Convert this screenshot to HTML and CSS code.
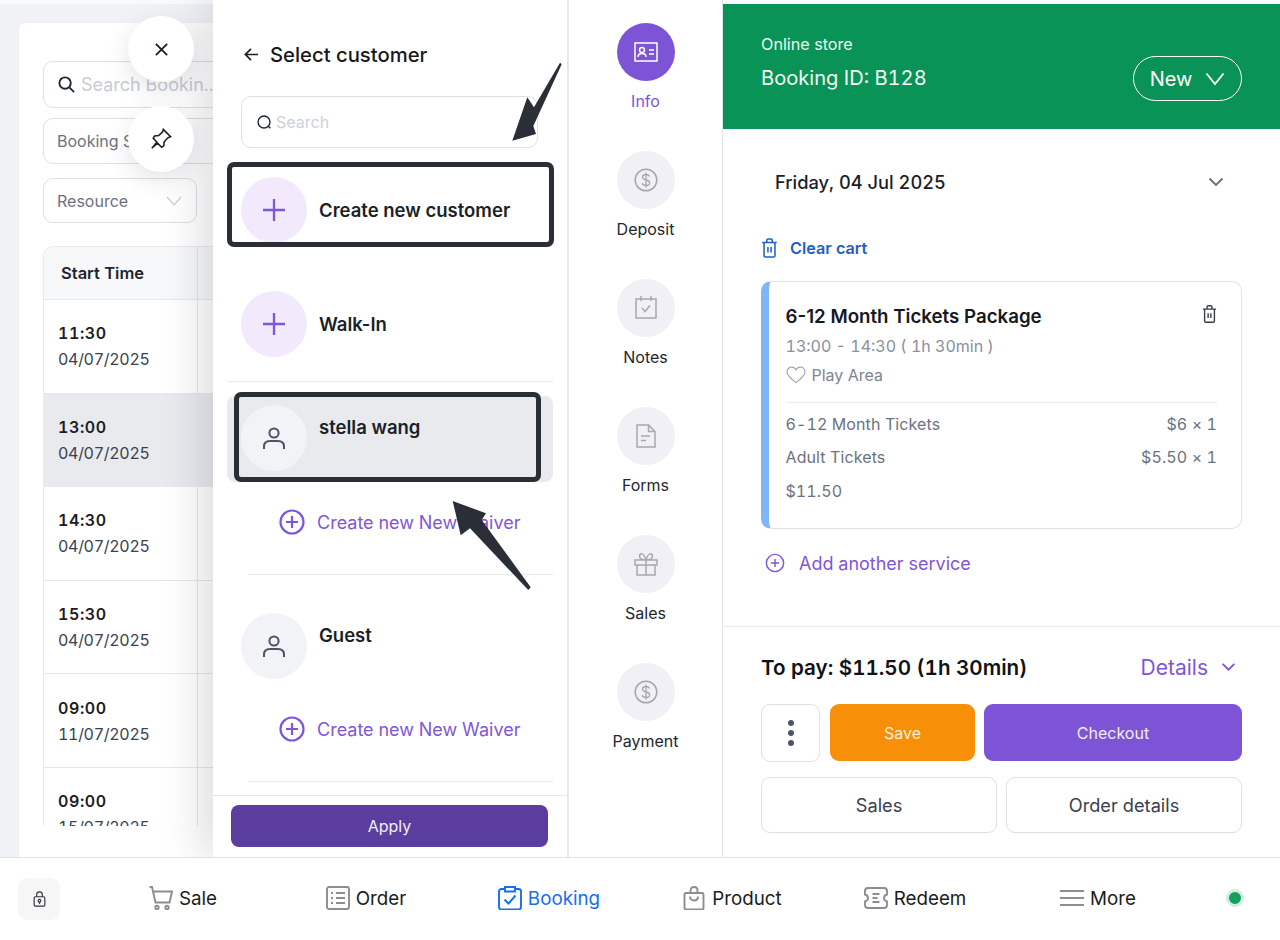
FILE: index.html
```html
<!DOCTYPE html>
<html lang="en">
<head>
<meta charset="utf-8">
<title>Booking</title>
<link rel="stylesheet" href="styles.css">
</head>
<body>
<div class="page">
  <main class="main">
    <section class="bookings">
      <div class="bookings-card">
        <div class="field field-search">
          <svg class="ico-search" viewBox="0 0 20 20"><circle cx="8.5" cy="8.5" r="6"/><path d="M13 13l5 5"/></svg>
          <span class="placeholder">Search Bookin..</span>
        </div>
        <div class="field field-status"><span>Booking Status</span></div>
        <div class="field field-resource">
          <span>Resource</span>
          <svg class="ico-chev-light" viewBox="0 0 18 12"><path d="M1 2l8 9 8-9"/></svg>
        </div>
        <div class="table">
          <div class="thead"><div class="cell">Start Time</div></div>
          <div class="row"><div class="cell"><b>11:30</b><span>04/07/2025</span></div></div>
          <div class="row row-selected"><div class="cell"><b>13:00</b><span>04/07/2025</span></div></div>
          <div class="row"><div class="cell"><b>14:30</b><span>04/07/2025</span></div></div>
          <div class="row"><div class="cell"><b>15:30</b><span>04/07/2025</span></div></div>
          <div class="row"><div class="cell"><b>09:00</b><span>11/07/2025</span></div></div>
          <div class="row"><div class="cell"><b>09:00</b><span>15/07/2025</span></div></div>
        </div>
      </div>
    </section>

    <section class="drawer">
      <header class="drawer-head">
        <svg class="ico-back" viewBox="0 0 18 18"><path d="M16 9H2.5M8.5 3l-6 6 6 6"/></svg>
        <h1>Select customer</h1>
      </header>
      <div class="drawer-search">
        <svg class="ico-search-sm" viewBox="0 0 18 18"><circle cx="8.5" cy="8.5" r="6.3"/><path d="M13 13l2.2 2.2"/></svg>
        <span>Search</span>
      </div>
      <div class="customers">
        <div class="cust cust-create">
          <span class="avatar avatar-add"><svg viewBox="0 0 24 24"><path d="M12 1v22M1 12h22"/></svg></span>
          <span class="cust-name cust-name-mid">Create new customer</span>
        </div>
        <div class="cust cust-walk">
          <span class="avatar avatar-add"><svg viewBox="0 0 24 24"><path d="M12 1v22M1 12h22"/></svg></span>
          <span class="cust-name cust-name-mid">Walk-In</span>
        </div>
        <hr class="rule rule-full">
        <div class="cust cust-selected">
          <span class="avatar avatar-user"><svg viewBox="0 0 24 24"><circle cx="12" cy="7" r="4.6"/><path d="M2 23v-2.500c0-3.500 2.500-5.500 6-5.500h8c3.500 0 6 2 6 5.500V23"/></svg></span>
          <span class="cust-name">stella wang</span>
        </div>
        <div class="waiver waiver-first">
          <svg viewBox="0 0 26 26"><circle cx="13" cy="13" r="11.500"/><path d="M13 7v12M7 13h12"/></svg>
          <span>Create new New Waiver</span>
        </div>
        <hr class="rule rule-first">
        <div class="cust cust-guest">
          <span class="avatar avatar-user"><svg viewBox="0 0 24 24"><circle cx="12" cy="7" r="4.6"/><path d="M2 23v-2.500c0-3.500 2.500-5.500 6-5.500h8c3.500 0 6 2 6 5.500V23"/></svg></span>
          <span class="cust-name">Guest</span>
        </div>
        <div class="waiver waiver-second">
          <svg viewBox="0 0 26 26"><circle cx="13" cy="13" r="11.500"/><path d="M13 7v12M7 13h12"/></svg>
          <span>Create new New Waiver</span>
        </div>
        <hr class="rule rule-second">
      </div>
      <footer class="drawer-foot"><button class="btn-apply">Apply</button></footer>
    </section>

    <nav class="rail">
      <div class="step step-active">
        <span class="step-circle"><svg viewBox="0 0 24 20"><rect x="1" y="1" width="22" height="18"/><circle cx="8" cy="8" r="2.500"/><path d="M4 15c0-2.500 1.500-3.500 4-3.500s4 1 4 3.500M15 8h5M15 12h5"/></svg></span>
        <span class="step-label">Info</span>
      </div>
      <div class="step">
        <span class="step-circle"><svg viewBox="0 0 24 24"><circle cx="12" cy="12" r="10.800"/><path class="thin" d="M15.500 8.500c-.5-1.300-1.800-2-3.500-2-2 0-3.500 1-3.500 2.700 0 3.800 7.200 1.800 7.200 5.600 0 1.700-1.600 2.700-3.700 2.700-1.900 0-3.300-.8-3.800-2.200M12 4.500v15"/></svg></span>
        <span class="step-label">Deposit</span>
      </div>
      <div class="step">
        <span class="step-circle"><svg viewBox="0 0 22 24"><rect x="1" y="3" width="20" height="19"/><path d="M6 0v5M16 0v5M7 12l3 3.500 5-6"/></svg></span>
        <span class="step-label">Notes</span>
      </div>
      <div class="step">
        <span class="step-circle"><svg viewBox="0 0 20 24"><path d="M1 1h11.500L19 7.500V23H1zM12.500 1v6.500H19M5 12h9M5 16.500h5"/></svg></span>
        <span class="step-label">Forms</span>
      </div>
      <div class="step">
        <span class="step-circle"><svg viewBox="0 0 24 24"><path d="M1 8h22v5H1zM3 13v10h18V13M12 8v15M12 8C8 8 5.500 6.500 5.500 4S9.500-.5 12 8zM12 8c4 0 6.500-1.500 6.500-4S14.500-.5 12 8z"/></svg></span>
        <span class="step-label">Sales</span>
      </div>
      <div class="step">
        <span class="step-circle"><svg viewBox="0 0 24 24"><circle cx="12" cy="12" r="10.800"/><path class="thin" d="M15.500 8.500c-.5-1.300-1.800-2-3.500-2-2 0-3.500 1-3.500 2.700 0 3.800 7.200 1.800 7.200 5.600 0 1.700-1.600 2.700-3.700 2.700-1.900 0-3.300-.8-3.800-2.200M12 4.500v15"/></svg></span>
        <span class="step-label">Payment</span>
      </div>
    </nav>

    <section class="detail">
      <header class="detail-head">
        <div class="detail-title">
          <div class="store">Online store</div>
          <div class="booking-id">Booking ID: B128</div>
        </div>
        <div class="pill"><span>New</span><svg viewBox="0 0 20 14"><path d="M1.500 1.500L10 12l8.500-10.500"/></svg></div>
      </header>
      <div class="detail-body">
        <div class="date-row">
          <span>Friday, 04 Jul 2025</span>
          <svg viewBox="0 0 16 10"><path d="M1.500 1.500L8 8l6.500-6.500"/></svg>
        </div>
        <div class="clear-cart">
          <svg viewBox="0 0 18 22"><path d="M1 5h16M3 5v14.500c0 1 .8 1.500 1.500 1.500h9c.7 0 1.500-.5 1.500-1.500V5M6 5V2.500C6 1.500 6.500 1 7.500 1h3c1 0 1.500.5 1.500 1.500V5M7.300 10v6M10.700 10v6"/></svg>
          <span>Clear cart</span>
        </div>
        <article class="cart">
          <div class="cart-top">
            <h2>6-12 Month Tickets Package</h2>
            <svg class="ico-trash" viewBox="0 0 18 22"><path d="M1 5h16M3 5v14.500c0 1 .8 1.500 1.500 1.500h9c.7 0 1.500-.5 1.500-1.500V5M6 5V2.500C6 1.500 6.500 1 7.500 1h3c1 0 1.500.5 1.500 1.500V5M7.300 10v6M10.700 10v6"/></svg>
          </div>
          <div class="cart-time">13:00 - 14:30 ( 1h 30min )</div>
          <div class="cart-place">
            <svg viewBox="0 0 22 20"><path d="M11 18.500C5 14 1 10.500 1 6.500 1 3.500 3.300 1.300 6 1.300c2 0 3.900 1 5 3 1.100-2 3-3 5-3 2.700 0 5 2.200 5 5.200 0 4-4 7.500-10 12z"/></svg>
            <span>Play Area</span>
          </div>
          <hr class="cart-rule">
          <div class="line line-first"><span>6-12 Month Tickets</span><span>$6 × 1</span></div>
          <div class="line line-second"><span>Adult Tickets</span><span>$5.50 × 1</span></div>
          <div class="line line-total"><span>$11.50</span></div>
        </article>
        <div class="add-service">
          <svg viewBox="0 0 22 22"><circle cx="11" cy="11" r="9.500"/><path d="M11 6.500v9M6.500 11h9"/></svg>
          <span>Add another service</span>
        </div>
      </div>
      <footer class="detail-foot">
        <div class="pay-row">
          <span class="pay">To pay: $11.50 (1h 30min)</span>
          <span class="details">Details <svg viewBox="0 0 14 9"><path d="M1.500 1.500L7 7l5.500-5.500"/></svg></span>
        </div>
        <div class="actions">
          <button class="btn btn-more"><i></i><i></i><i></i></button>
          <button class="btn btn-save">Save</button>
          <button class="btn btn-checkout">Checkout</button>
        </div>
        <div class="actions-2">
          <button class="btn btn-plain">Sales</button>
          <button class="btn btn-plain">Order details</button>
        </div>
      </footer>
    </section>
  </main>

  <nav class="tabbar">
    <div class="tab-lock"><span class="lock"><svg viewBox="0 0 14 18"><rect x="1" y="6.500" width="12" height="10.500" rx="1.500"/><path d="M3.800 6.500V4.200C3.800 2.300 5.200 1 7 1s3.200 1.300 3.200 3.200v2.300"/><circle cx="7" cy="11" r="1.500"/><path d="M7 12.500v2"/></svg></span></div>
    <div class="tab">
      <svg viewBox="0 0 24 24"><path d="M.5 1H3l3.500 15.500h14L23 5.500H4.500"/><circle cx="8" cy="21.500" r="1.700"/><circle cx="18" cy="21.500" r="1.700"/></svg>
      <span>Sale</span>
    </div>
    <div class="tab">
      <svg viewBox="0 0 24 24"><rect x="1" y="1" width="22" height="22" rx="2"/><path d="M10 7h9M10 12h9M10 17h9M5 7h2M5 12h2M5 17h2"/></svg>
      <span>Order</span>
    </div>
    <div class="tab tab-active">
      <svg viewBox="0 0 24 24"><path d="M7 3H3.500C2 3 1 4 1 5.500V21c0 1.500 1 2.500 2.500 2.500h17c1.500 0 2.500-1 2.500-2.500V5.500C23 4 22 3 20.500 3H17M7 1h10v4.500H7zM6.500 13.500l4 4 7-8"/></svg>
      <span>Booking</span>
    </div>
    <div class="tab">
      <svg viewBox="0 0 24 24"><path d="M4 7h16c.8 0 1.500.7 1.500 1.500V22c0 .8-.7 1.500-1.500 1.500H4c-.8 0-1.500-.7-1.500-1.500V8.500C2.500 7.700 3.200 7 4 7zM8.500 7V4.500C8.500 2.500 10 1 12 1s3.500 1.500 3.500 3.500V7M8 10.500c0 2.500 1.700 4 4 4s4-1.500 4-4"/></svg>
      <span>Product</span>
    </div>
    <div class="tab">
      <svg viewBox="0 0 24 22"><path d="M4 1h16c1.700 0 3 1.300 3 3v3.500c-2 .5-3 2-3 3.500s1 3 3 3.500V18c0 1.700-1.300 3-3 3H4c-1.700 0-3-1.300-3-3v-3.500c2-.5 3-2 3-3.500S3 8 1 7.500V4c0-1.700 1.300-3 3-3zM8.500 7h7M8.500 11h5M8.500 15h7"/></svg>
      <span>Redeem</span>
    </div>
    <div class="tab">
      <svg viewBox="0 0 24 18"><path d="M0 2h24M0 9h24M0 16h24"/></svg>
      <span>More</span>
    </div>
    <div class="tab-status"><span class="status-dot"></span></div>
  </nav>

  <div class="fab fab-close"><svg viewBox="0 0 16 16"><path d="M2 2l12 12M14 2L2 14"/></svg></div>
  <div class="fab fab-pin"><svg viewBox="0 0 24 24"><path d="M14.500 1.500l8 8-3 1.200-4 4.300-.5 4.500-2.300 1.500-4.500-4.500L2 22l5.500-6.500-4-4.500 1.500-2.300 4.500-.5 4.300-4z"/></svg></div>
  <div class="callout callout-create"></div>
  <div class="callout callout-stella"></div>
  <svg class="arrows" viewBox="0 0 1280 940">
    <polygon points="560,62.700 561.700,64.300 533.300,126 536,134 512.300,140.700 527.300,97.300 534,107.300"/>
    <polygon points="452.700,501 486,513.300 481.700,520 530.700,587.300 528.300,590 470,528.300 460.700,535.300"/>
  </svg>
</div>
</body>
</html>
```
FILE: styles.css
```css
* { box-sizing: border-box; }
html, body { margin: 0; padding: 0; }
body { font-family: Inter, "Liberation Sans", sans-serif; color: #1a1d24; background: #fff; font-variant-numeric: tabular-nums; }
button { font-family: inherit; cursor: pointer; }
h1, h2 { margin: 0; }
hr { border: 0; margin: 0; }
svg { display: block; flex: none; fill: none; stroke: currentColor; }

.page { position: relative; width: 1280px; height: 940px; overflow: hidden; display: flex; flex-direction: column; }
.main { display: flex; height: 857px; padding-top: 4px; background: #f9fafb; }

/* bookings list behind the drawer */
.bookings { width: 213px; flex: none; overflow: hidden; background: #f0f2f6; padding: 19px 0 0 19px; }
.bookings-card { width: 400px; height: 834px; background: #fff; border-radius: 6px 0 0 0; padding: 38px 0 0 24px; }
.field { height: 47px; display: flex; align-items: center; border: 1px solid #dcdfe5; border-radius: 10px; font-size: 16px; color: #6b7280; padding-left: 13px; }
.field-search { width: 300px; gap: 5px; }
.field-status { width: 300px; height: 46px; margin-top: 10px; }
.field-resource { width: 154px; height: 45px; margin-top: 14px; justify-content: space-between; padding-right: 14px; }
.ico-search { width: 19px; height: 19px; stroke: #1f2937; stroke-width: 2; }
.placeholder { font-size: 18px; color: #c8ccd4; }
.ico-chev-light { width: 16px; height: 11px; stroke: #c4c8d0; stroke-width: 1.300; }
.table { width: 400px; height: 580px; margin-top: 23px; overflow: hidden; border-top: 1px solid #e8eaee; border-left: 1px solid #e8eaee; border-radius: 10px 0 0 0; }
.thead { height: 53px; background: #f7f8fa; border-bottom: 1px solid #e5e7eb; font-size: 16.500px; font-weight: 600; }
.thead .cell { height: 100%; display: flex; align-items: center; padding-left: 17px; color: #1f2430; }
.row { height: 93.600px; border-bottom: 1px solid #e5e7eb; }
.row .cell { height: 100%; display: flex; flex-direction: column; justify-content: center; padding-left: 14px; gap: 6px; }
.cell { width: 154px; border-right: 1px solid #e5e7eb; }
.row b { font-size: 16px; line-height: 20px; font-weight: 600; letter-spacing: .6px; color: #1a1d24; }
.row span { font-size: 16px; line-height: 20px; color: #3b4150; letter-spacing: -.3px; }
.row-selected { background: #e8eaee; border-bottom-color: #e8eaee; }
.row-selected .cell { border-right-color: #e8eaee; }

/* customer drawer */
.drawer { width: 354px; flex: none; background: #fff; display: flex; flex-direction: column; position: relative; box-shadow: -14px 0 36px rgba(40, 44, 60, .14); margin-top: -4px; padding-top: 4px; }
.drawer-head { display: flex; align-items: center; gap: 10px; height: 40px; margin: 30px 0 0 30px; }
.ico-back { width: 17px; height: 17px; stroke: #1a1d24; stroke-width: 1.800; }
.drawer-head h1 { font-size: 20.250px; font-weight: 500; color: #16181d; }
.drawer-search { width: 297px; height: 52px; margin: 22px 0 0 28px; border: 1.500px solid #dfe1e7; border-radius: 10px; display: flex; align-items: center; gap: 3px; padding-left: 14px; font-size: 16px; color: #cdd2da; }
.ico-search-sm { width: 17px; height: 17px; stroke: #1f2937; stroke-width: 1.500; }
.customers { padding: 0 14px; flex: 1; }
.cust { display: flex; }
.cust-create { margin-top: 29px; align-items: center; padding-left: 14px; }
.cust-walk { margin-top: 48px; align-items: center; padding-left: 14px; }
.cust-selected { margin-top: 14px; height: 86px; padding: 9px 0 0 14px; background: #e8eaee; border-radius: 8px; }
.cust-guest { margin-top: 38px; padding-left: 14px; }
.avatar { width: 66px; height: 66px; border-radius: 50%; display: flex; align-items: center; justify-content: center; flex: none; }
.avatar-add { background: #f3e9fc; color: #7f56d9; }
.avatar-add svg { width: 24px; height: 24px; stroke-width: 2.300; }
.avatar-user { background: #f2f3f7; color: #4b5563; }
.avatar-user svg { width: 24px; height: 26px; stroke-width: 2; }
.cust-name { margin-left: 12px; font-size: 18.500px; font-weight: 600; font-variant-numeric: normal; color: #1c1f26; line-height: 24px; padding-top: 10px; }
.cust-name-mid { padding-top: 0; }
.rule { height: 1px; background: #e8eaee; }
.rule-full { margin-top: 24px; }
.rule-first { margin: 32px 0 0 21px; }
.rule-second { margin: 32px 0 0 21px; }
.waiver { display: flex; align-items: center; height: 40px; padding-left: 52px; gap: 12px; color: #7f56d9; font-size: 18px; }
.waiver svg { width: 26px; height: 26px; stroke-width: 2.200; }
.waiver-first { margin-top: 20px; }
.waiver-second { margin-top: 30px; }
.drawer-foot { border-top: 1px solid #e5e7eb; padding: 9px 19px 10px 18px; }
.btn-apply { display: block; width: 317px; height: 42px; border: 0; border-radius: 8px; background: #5b3d9e; color: #f2eefb; font-size: 16px; }

/* step rail */
.rail { width: 156px; flex: none; background: #fff; border-left: 2px solid #e5e7eb; border-right: 1px solid #e2e4e9; margin-top: -4px; position: relative; padding-top: 23px; }
.step { height: 128px; display: flex; flex-direction: column; align-items: center; }
.step-circle { width: 58px; height: 58px; border-radius: 50%; background: #f0f0f6; color: #a6a8b0; display: flex; align-items: center; justify-content: center; }
.step-circle svg { width: 24px; height: 24px; stroke-width: 1.500; }
.step-circle svg .thin { stroke-width: 1.300; }
.step-label { margin-top: 9px; font-size: 16px; line-height: 22px; color: #24272e; }
.step-active .step-circle { background: #7d54d6; color: #fff; }
.step-active .step-label { color: #7d54d6; }

/* booking detail */
.detail { flex: 1; display: flex; flex-direction: column; background: #fff; }
.detail-head { height: 125px; flex: none; background: #099356; color: #fff; display: flex; justify-content: space-between; align-items: flex-start; padding: 30px 38px 0; }
.store { font-size: 16.200px; line-height: 20px; color: #ecf9f2; }
.booking-id { margin-top: 10px; font-size: 20.100px; line-height: 28px; color: #f2fbf6; }
.pill { width: 109px; height: 45px; margin-top: 22px; border: 1.500px solid #fff; border-radius: 23px; display: flex; align-items: center; justify-content: center; gap: 13px; font-size: 20px; }
.pill svg { width: 20px; height: 14px; stroke: #fff; stroke-width: 1.800; }
.detail-body { padding: 33px 38px 0; }
.date-row { height: 40px; display: flex; align-items: center; justify-content: space-between; padding: 0 18px 0 14px; font-size: 18.300px; font-weight: 500; color: #1a1d2a; }
.date-row svg { width: 16px; height: 10px; stroke: #676c78; stroke-width: 1.800; }
.clear-cart { height: 24px; margin-top: 34px; display: flex; align-items: center; gap: 12px; font-size: 16.200px; font-weight: 600; color: #1e60c4; }
.clear-cart svg { width: 17px; height: 20px; stroke-width: 1.700; }
.cart { height: 248px; margin-top: 21px; border: 1.500px solid #dfe2e8; border-left: 8px solid #7db7f7; border-radius: 10px; padding: 22px 24px 0 16.500px; }
.cart-top { display: flex; justify-content: space-between; align-items: flex-start; height: 24px; }
.cart-top h2 { font-size: 18.700px; line-height: 26px; font-weight: 600; font-variant-numeric: normal; color: #15181f; }
.ico-trash { width: 15px; height: 18px; margin-top: 1px; color: #363b46; stroke-width: 1.700; }
.cart-time { margin-top: 8px; font-size: 16px; line-height: 20px; color: #8a909c; }
.cart-place { margin-top: 9px; display: flex; align-items: center; gap: 6px; height: 20px; font-size: 16px; color: #80858f; }
.cart-place svg { width: 20px; height: 18px; stroke: #a0a4ac; stroke-width: 1.300; }
.cart-rule { height: 1px; margin-top: 17px; background: #e9ebef; }
.line { display: flex; justify-content: space-between; font-size: 16px; line-height: 20px; color: #6c7280; letter-spacing: .1px; }
.line-first { margin-top: 11px; }
.line-second { margin-top: 13px; }
.line-total { margin-top: 14px; }
.add-service { height: 24px; margin-top: 22px; display: flex; align-items: center; gap: 14px; padding-left: 4px; font-size: 18px; color: #7f56d9; }
.add-service svg { width: 20px; height: 20px; stroke-width: 1.600; }

.detail-foot { margin-top: auto; border-top: 1px solid #e5e7eb; padding: 27px 38px 24px; }
.pay-row { height: 26px; display: flex; justify-content: space-between; align-items: center; }
.pay { font-size: 20.600px; font-weight: 600; color: #0f1218; }
.details { display: flex; align-items: center; gap: 13px; padding-right: 6px; font-size: 21px; color: #7f56d9; }
.details svg { width: 15px; height: 10px; stroke-width: 1.700; }
.actions { display: flex; gap: 9px; margin-top: 24px; height: 58px; }
.actions-2 { display: flex; gap: 9px; margin-top: 15px; height: 56px; }
.btn { border-radius: 9px; border: 0; font-size: 16px; }
.btn-more { width: 59px; background: #fff; border: 1.500px solid #dfe1e7; display: flex; flex-direction: column; align-items: center; justify-content: center; gap: 4px; }
.btn-more i { display: block; width: 6px; height: 6px; border-radius: 50%; background: #4b5568; }
.btn-save { width: 145px; height: 57px; margin-left: 1px; background: #f78f08; color: #fdf0dd; }
.btn-checkout { flex: 1; height: 57px; background: #7d54d6; color: #f1ecfb; }
.btn-plain { flex: 1; background: #fff; border: 1.500px solid #dfe1e7; font-size: 18.200px; color: #3a404d; }

/* bottom tab bar */
.tabbar { height: 83px; flex: none; position: relative; background: #fff; border-top: 1px solid #dfe1e6; display: grid; grid-template-columns: 91.500px repeat(6, 183px) 1fr; align-items: center; }
.tab-lock { padding-left: 18px; }
.lock { width: 42px; height: 42px; border-radius: 9px; background: #f6f6f6; color: #33363c; display: flex; align-items: center; justify-content: center; }
.lock svg { width: 13px; height: 16px; stroke-width: 1.300; }
.tab { display: flex; align-items: center; justify-content: center; gap: 6px; padding-bottom: 2px; font-size: 18.800px; font-weight: 400; color: #1a1c22; }
.tab svg { width: 24px; height: 24px; color: #8b8d92; stroke-width: 1.900; }
.tab-active { color: #1570ef; }
.tab-active svg { color: #1570ef; }
.tab-status { display: flex; padding: 0 0 2px 36px; }
.status-dot { width: 18px; height: 18px; border-radius: 50%; background: #16a05f; border: 3.500px solid #cfeee0; }

/* overlays */
.fab { position: absolute; left: 128px; width: 66px; height: 66px; border-radius: 50%; background: #fff; box-shadow: 0 8px 24px rgba(40, 44, 60, .13); display: flex; align-items: center; justify-content: center; color: #1a1d24; }
.fab-close { top: 16px; }
.fab-close svg { width: 15px; height: 15px; stroke-width: 1.900; }
.fab-pin { top: 106px; }
.fab-pin svg { width: 22px; height: 22px; stroke-width: 1.700; }
.callout { position: absolute; border: 5px solid #2a2e36; border-radius: 7px; }
.callout-create { left: 227px; top: 162px; width: 327px; height: 85px; }
.callout-stella { left: 234px; top: 392px; width: 307px; height: 90px; }
.arrows { position: absolute; left: 0; top: 0; width: 1280px; height: 940px; pointer-events: none; }
.arrows polygon { fill: #2a2e36; stroke: none; }
```
